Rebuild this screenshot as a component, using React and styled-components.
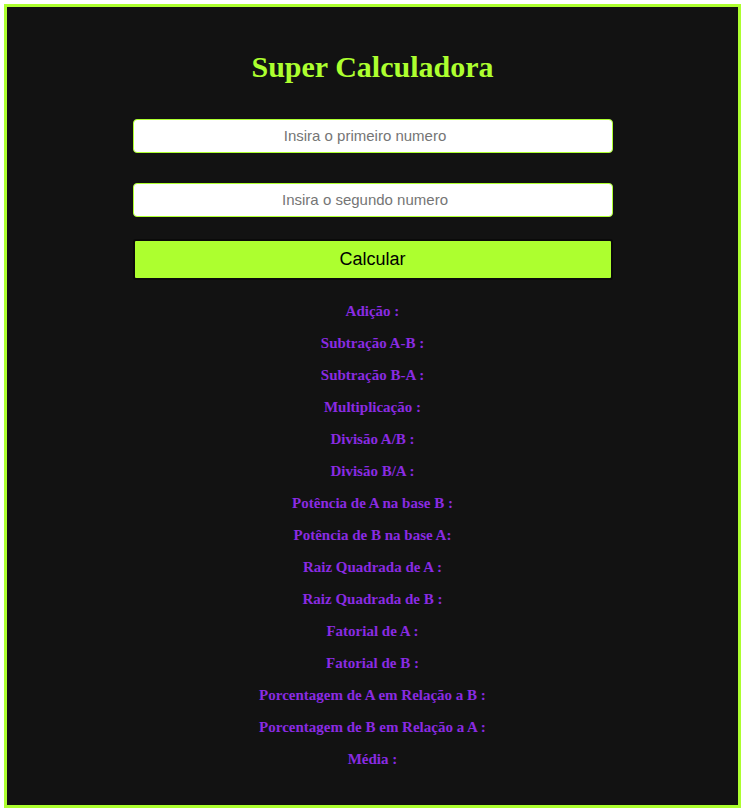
import styled, { createGlobalStyle } from "styled-components"

const GlobalStyle = createGlobalStyle`
  html, body {
    margin: 0;
    padding: 0;
    background-color: #ffffff;
  }
  body {
    font-family: "Liberation Serif", "Times New Roman", serif;
  }
`;

const Page = styled.div`
  margin: 4px;
  height: 804px;
  box-sizing: border-box;
  border: 3px solid #adff2f;
  background-color: #121212;
  display: flex;
  flex-direction: column;
  align-items: center;
  padding-top: 43px;
`;

const Title = styled.h1`
  margin: 0 0 35px 0;
  font-family: "Liberation Serif", "Times New Roman", serif;
  font-size: 30px;
  line-height: 34px;
  font-weight: bold;
  color: #adff2f;
`;

const Form = styled.div`
  width: 480px;
  display: flex;
  flex-direction: column;
`;

const Input = styled.input`
  width: 100%;
  height: 34px;
  box-sizing: border-box;
  border: 1px solid #adff2f;
  border-radius: 4px;
  background-color: #ffffff;
  font-family: "Liberation Sans", Arial, sans-serif;
  font-size: 15px;
  text-align: center;
  outline: none;
  padding: 0 0 1px 0;
  margin-bottom: ${(p) => p.$gap}px;

  &::placeholder {
    color: #757575;
  }
`;

const Button = styled.button`
  width: 100%;
  height: 41px;
  box-sizing: border-box;
  border: 2px solid #0a0a0a;
  border-radius: 3px;
  background-color: #adff2f;
  color: #000000;
  font-family: "Liberation Sans", Arial, sans-serif;
  font-size: 18px;
  cursor: pointer;
`;

const Results = styled.div`
  margin-top: 15px;
  display: flex;
  flex-direction: column;
  align-items: center;
`;

const Result = styled.p`
  margin: 0;
  font-family: "Liberation Serif", "Times New Roman", serif;
  font-size: 15px;
  line-height: 32px;
  font-weight: bold;
  color: #8a2be2;
`;

const labels = [
  "Adição :",
  "Subtração A-B :",
  "Subtração B-A :",
  "Multiplicação :",
  "Divisão A/B :",
  "Divisão B/A :",
  "Potência de A na base B :",
  "Potência de B na base A:",
  "Raiz Quadrada de A :",
  "Raiz Quadrada de B :",
  "Fatorial de A :",
  "Fatorial de B :",
  "Porcentagem de A em Relação a B :",
  "Porcentagem de B em Relação a A :",
  "Média :",
]

export default function App() {
  return (
    <>
      <GlobalStyle />
      <Page>
        <Title>Super Calculadora</Title>
        <Form>
          <Input type="number" placeholder="Insira o primeiro numero" $gap={30} />
          <Input type="number" placeholder="Insira o segundo numero" $gap={22} />
          <Button type="button">Calcular</Button>
        </Form>
        <Results>
          {labels.map((label) => (
            <Result key={label}>{label}</Result>
          ))}
        </Results>
      </Page>
    </>
  )
}
